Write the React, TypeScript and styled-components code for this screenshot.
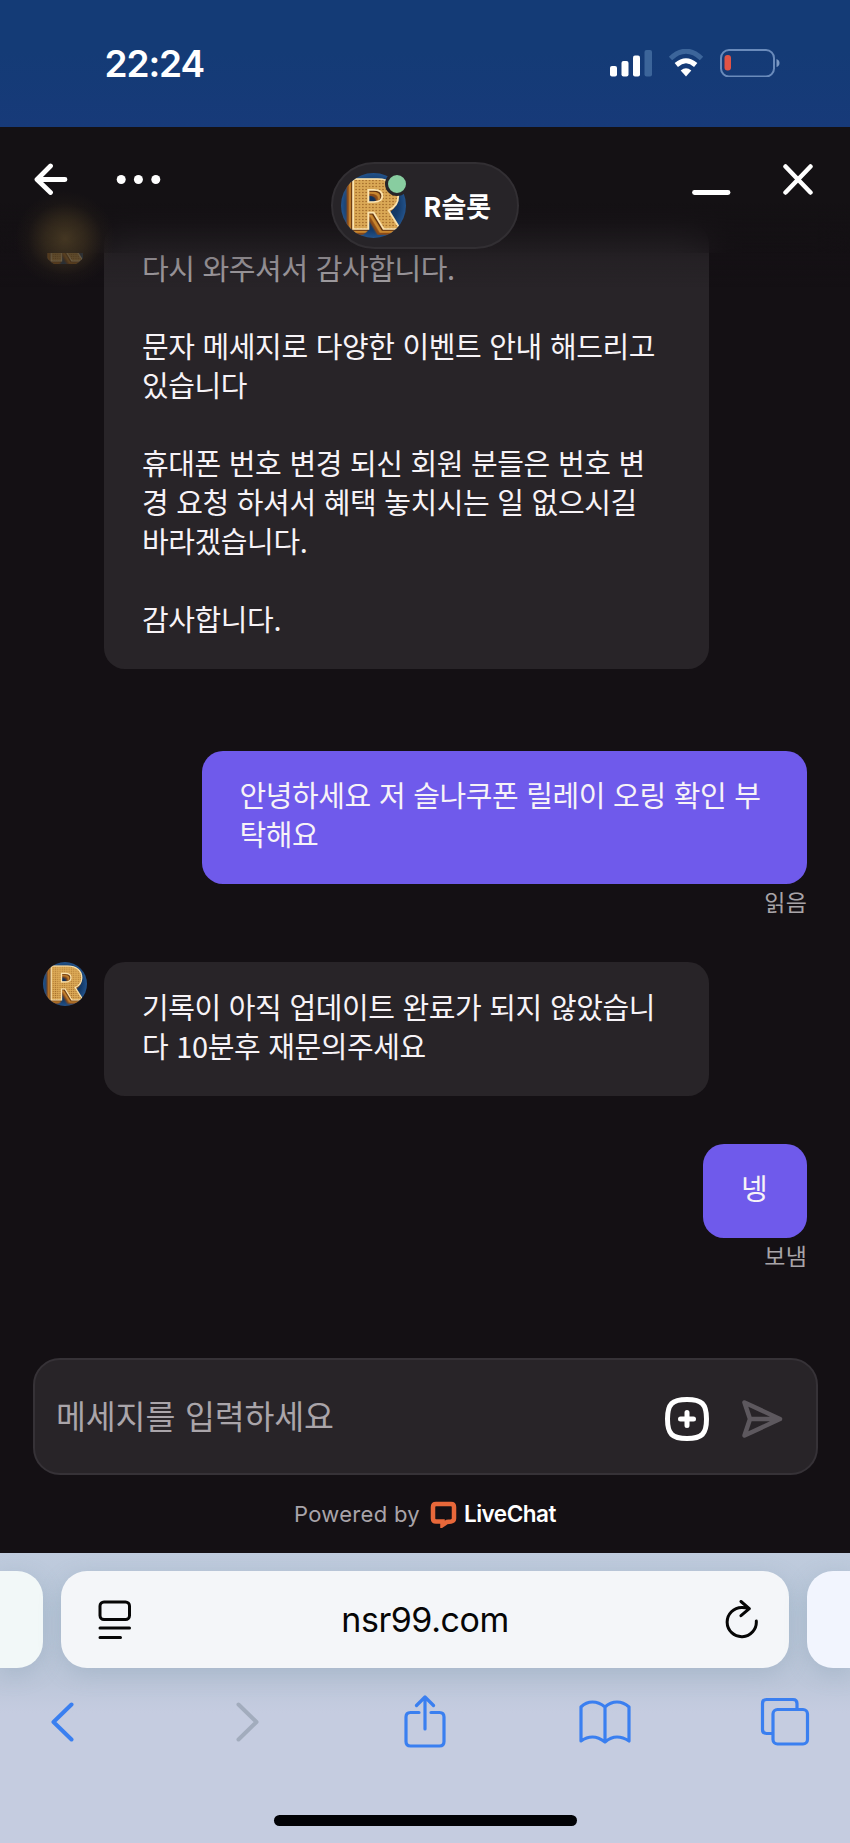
import React from 'react';
import styled, { createGlobalStyle } from 'styled-components';

const GlobalStyle = createGlobalStyle`
  *, *::before, *::after { box-sizing: border-box; }
  body { margin: 0; background: #141014; }
  svg { display: block; flex: none; }
`;

const latin = `Inter, "Noto Sans CJK KR", sans-serif`;
const korean = `"Noto Sans CJK KR", sans-serif`;

const Screen = styled.div`
  width: 850px;
  height: 1843px;
  display: flex;
  flex-direction: column;
  overflow: hidden;
  font-family: ${korean};
  color: #f7f3f7;
`;

const StatusBar = styled.div`
  height: 127px;
  flex: none;
  display: flex;
  align-items: flex-start;
  padding: 49px 70px 0 104.5px;
  background: linear-gradient(#143b76 40%, #173a79);
`;

const Clock = styled.div`
  flex: 1;
  font: 600 37px/30px ${latin};
  letter-spacing: -1.1px;
  color: #fff;
`;

const StatusIcons = styled.div`
  display: flex;
  gap: 16px;
`;

const Chat = styled.main`
  position: relative;
  height: 1426px;
  flex: none;
  display: flex;
  flex-direction: column;
  background: #141014;
`;

const Header = styled.header`
  position: absolute;
  inset: 0 0 auto 0;
  height: 170px;
  z-index: 1;
`;

const HeaderBlur = styled.div`
  position: absolute;
  inset: 0 0 auto 0;
  height: 126px;
  backdrop-filter: blur(18px);
`;

const HeaderShade = styled.div`
  position: absolute;
  inset: 0;
  background: linear-gradient(#141114 0, #141114 76px, rgba(20, 17, 20, 0.5) 110px, rgba(20, 17, 20, 0.15) 134px, rgba(20, 17, 20, 0) 160px);
`;

const AvatarGlow = styled.div`
  position: absolute;
  left: 15px;
  top: 64px;
  width: 100px;
  height: 96px;
  background: radial-gradient(closest-side, rgba(100, 80, 44, 0.6), rgba(88, 70, 38, 0.42) 40%, rgba(60, 48, 28, 0.14) 75%, rgba(40, 32, 20, 0));
`;

const HeaderRow = styled.div`
  position: relative;
  display: flex;
  align-items: flex-start;
  padding: 36px 36px 0 34px;
`;

const HeaderGroup = styled.div<{ $end?: boolean }>`
  flex: 1;
  display: flex;
  justify-content: ${(p) => (p.$end ? 'flex-end' : 'flex-start')};
  gap: ${(p) => (p.$end ? 51 : 48)}px;
`;

const AgentPill = styled.div`
  display: flex;
  align-items: center;
  width: 188px;
  height: 87px;
  margin: -1px -1px 0 1px;
  padding-left: 8px;
  gap: 17px;
  border: 2px solid #322f33;
  border-radius: 44px;
  background: #272428;
  font: 700 27px/38px ${korean};
  color: #fff;
`;

const AgentPhoto = styled.div`
  position: relative;
  width: 65px;
  height: 65px;
`;

const OnlineDot = styled.span`
  position: absolute;
  top: -1px;
  right: -3px;
  width: 24px;
  height: 24px;
  border: 3px solid #272428;
  border-radius: 50%;
  background: #88cda0;
`;

const Messages = styled.section`
  height: 1231px;
  flex: none;
  padding: 96px 43px 0;
  display: flex;
  flex-direction: column;
`;

const AgentMessage = styled.div<{ $top?: number }>`
  display: flex;
  align-items: flex-start;
  gap: 17px;
  margin-top: ${(p) => p.$top ?? 0}px;
`;

const UserMessage = styled.div<{ $top: number }>`
  display: flex;
  flex-direction: column;
  align-items: flex-end;
  margin-top: ${(p) => p.$top}px;
`;

const AvatarSlot = styled.div<{ $scrolled?: boolean }>`
  width: 44px;
  height: 44px;
  opacity: ${(p) => (p.$scrolled ? 0.5 : 1)};
  clip-path: ${(p) => (p.$scrolled ? 'inset(30px 4px 3px 4px)' : 'none')};
`;

const Bubble = styled.div<{ $own?: boolean; $short?: boolean }>`
  width: ${(p) => (p.$short ? 104 : p.$own ? 605.5 : 605)}px;
  padding: 24.5px 38px 31px;
  border-radius: 21px;
  background: ${(p) => (p.$own ? '#6f5aeb' : '#282428')};
  font: 400 29px/39px ${korean};
  letter-spacing: -0.4px;
  word-spacing: 1.9px;
  white-space: pre;
`;

const Faded = styled.span`
  color: rgba(247, 243, 247, 0.6);
`;

const Receipt = styled.div`
  margin-top: 2px;
  height: 30px;
  font: 400 23px/30px ${korean};
  letter-spacing: 0.2px;
  color: #a8a4a8;
`;

const Composer = styled.div`
  height: 117px;
  flex: none;
  margin: 0 32px 0 33px;
  padding: 0 33px 0 21px;
  display: flex;
  align-items: center;
  border: 2px solid #363237;
  border-radius: 27px;
  background: #282428;
`;

const Placeholder = styled.div`
  flex: 1;
  font: 400 32.5px/44px ${korean};
  letter-spacing: -0.1px;
  word-spacing: 2.5px;
  padding-bottom: 3px;
  color: #aaa5aa;
`;

const ComposerIcons = styled.div`
  display: flex;
  align-items: center;
  gap: 32px;
  padding-top: 5px;
`;

const Powered = styled.div`
  height: 30px;
  margin-top: 24px;
  padding-left: 294px;
  display: flex;
  align-items: center;
  font: 400 22px/30px ${latin};
  letter-spacing: 0.3px;
  color: #a9a4a9;
`;

const Brand = styled.div`
  display: flex;
  align-items: center;
  margin-left: 10px;
  gap: 7px;
  font-weight: 600;
  font-size: 22.5px;
  letter-spacing: -0.5px;
  color: #fff;
`;

const Browser = styled.footer`
  height: 290px;
  flex: none;
  padding-top: 18px;
  display: flex;
  flex-direction: column;
  background: linear-gradient(#bfcbdd 0, #b9c7d9 60px, #bdc7da 130px, #c5cce0 160px, #c5cce0);
`;

const TabStrip = styled.div`
  display: flex;
  gap: 18px;
`;

const Tab = styled.div<{ $side?: 'left' | 'right' }>`
  width: ${(p) => (p.$side ? 43 : 728)}px;
  height: 97px;
  flex: none;
  padding: ${(p) => (p.$side ? '0' : '0 31px 0 37px')};
  display: flex;
  align-items: center;
  justify-content: space-between;
  border-radius: ${(p) => (p.$side === 'left' ? '0 26px 26px 0' : p.$side === 'right' ? '26px 0 0 26px' : '26px')};
  background: ${(p) => (p.$side === 'left' ? '#f2f8f8' : p.$side === 'right' ? '#f2f5fe' : '#f4f6f9')};
  box-shadow: 0 6px 22px rgba(120, 145, 165, 0.3);
`;

const Address = styled.div`
  margin-left: -7px;
  font: 400 34px/44px ${latin};
  letter-spacing: -0.45px;
  color: #060606;
`;

const Toolbar = styled.nav`
  height: 54px;
  margin-top: 27px;
  padding-left: 51px;
  display: flex;
  align-items: center;
`;

const Tool = styled.div<{ $gap?: number; $muted?: boolean }>`
  margin-left: ${(p) => p.$gap ?? 0}px;
  color: ${(p) => (p.$muted ? '#a2acbd' : '#3a7ff0')};
`;

const HomeBar = styled.div`
  width: 303px;
  height: 11px;
  margin: 66px 0 0 274px;
  border-radius: 6px;
  background: #020206;
`;

const LogoLetter = styled.text`
  font-family: Inter, sans-serif;
  font-weight: 900;
  font-size: 69px;
  filter: drop-shadow(-1px 1.5px 0 #5e300f) drop-shadow(-1.5px 2px 0 #c8862f) drop-shadow(-2px 2px 0 #8a4a17);
`;

function Logo({ size, id }: { size: number; id: string }) {
  return (
    <svg width={size} height={size} viewBox="0 0 65 65">
      <defs>
        <clipPath id={`${id}-clip`}><circle cx="32.5" cy="32.5" r="32.5" /></clipPath>
        <radialGradient id={`${id}-bg`}>
          <stop offset="0" stopColor="#0f2c54" />
          <stop offset="0.75" stopColor="#143a68" />
          <stop offset="1" stopColor="#22528a" />
        </radialGradient>
        <pattern id={`${id}-mesh`} width="3" height="3" patternUnits="userSpaceOnUse">
          <rect width="3" height="3" fill="#dba956" />
          <circle cx="1.5" cy="1.5" r="0.8" fill="#a66f2c" />
        </pattern>
      </defs>
      <g clipPath={`url(#${id}-clip)`}>
        <rect width="65" height="65" fill={`url(#${id}-bg)`} />
        <LogoLetter x="7.5" y="55.5" transform="scale(1.12 1)" fill={`url(#${id}-mesh)`} stroke="#fbe3ae" strokeWidth="1.6">R</LogoLetter>
      </g>
    </svg>
  );
}

const line = { fill: 'none', stroke: 'currentColor', strokeLinecap: 'round', strokeLinejoin: 'round' } as const;

export default function App() {
  return (
    <Screen>
      <GlobalStyle />
      <StatusBar>
        <Clock>22:24</Clock>
        <StatusIcons>
          <svg width="42" height="28" viewBox="0 0 42 28" fill="#fff">
            <rect y="17" width="7" height="10.500" rx="2" />
            <rect x="11.500" y="12" width="7" height="15.500" rx="2" />
            <rect x="23" y="6.500" width="7" height="21" rx="2" />
            <rect x="34.500" y="1" width="7.500" height="26.500" rx="2" fill="#3c659a" />
          </svg>
          <svg width="36" height="28" viewBox="0 0 36 28">
            <path d="M2.500 9.500Q18-5 33.500 9.500" fill="none" stroke="#3c659a" strokeWidth="5" />
            <path d="M8.300 16Q18 7.500 27.700 16" fill="none" stroke="#fff" strokeWidth="5" />
            <path d="M18 27.500L12.700 21.500Q18 17 23.300 21.500Z" fill="#fff" />
          </svg>
          <svg width="60" height="28" viewBox="0 0 60 28">
            <rect x="1" y="1" width="53" height="26.500" rx="8" fill="none" stroke="#6a8bbb" strokeWidth="2" />
            <path d="M56.500 10Q59.500 11 59.500 14T56.500 18Z" fill="#7b98c2" />
            <rect x="4.500" y="6" width="6.500" height="15.500" rx="3" fill="#e15345" />
          </svg>
        </StatusIcons>
      </StatusBar>

      <Chat>
        <Header>
          <HeaderBlur />
          <HeaderShade />
          <AvatarGlow />
          <HeaderRow>
            <HeaderGroup>
              <svg width="34" height="32" viewBox="0 0 34 32" color="#fff" {...line} strokeWidth="4.800">
                <path d="M31 16.500H3.500M16.500 3L3 16.500L16.500 29.500" />
              </svg>
              <svg width="46" height="32" viewBox="0 0 46 32" fill="#fff">
                <circle cx="5.200" cy="16.500" r="4.500" />
                <circle cx="22.400" cy="16.500" r="4.500" />
                <circle cx="39.800" cy="16.500" r="4.500" />
              </svg>
            </HeaderGroup>
            <AgentPill>
              <AgentPhoto>
                <Logo size={65} id="pill" />
                <OnlineDot />
              </AgentPhoto>
              R슬롯
            </AgentPill>
            <HeaderGroup $end>
              <svg width="40" height="34" viewBox="0 0 40 34" color="#fff" {...line} strokeWidth="4.800">
                <path d="M3.500 29.500H37" />
              </svg>
              <svg width="32" height="32" viewBox="0 0 32 32" color="#fff" {...line} strokeWidth="4.500">
                <path d="M3.500 3.500L28.500 29.500M28.500 3.500L3.500 29.500" />
              </svg>
            </HeaderGroup>
          </HeaderRow>
        </Header>

        <Messages>
          <AgentMessage>
            <AvatarSlot $scrolled><Logo size={44} id="first" /></AvatarSlot>
            <Bubble>
              <Faded>다시 와주셔서 감사합니다.</Faded>
              {'\n\n문자 메세지로 다양한 이벤트 안내 해드리고\n있습니다\n\n휴대폰 번호 변경 되신 회원 분들은 번호 변\n경 요청 하셔서 혜택 놓치시는 일 없으시길\n바라겠습니다.\n\n감사합니다.'}
            </Bubble>
          </AgentMessage>
          <UserMessage $top={82}>
            <Bubble $own>{'안녕하세요 저 슬나쿠폰 릴레이 오링 확인 부\n탁해요'}</Bubble>
            <Receipt>읽음</Receipt>
          </UserMessage>
          <AgentMessage $top={46}>
            <AvatarSlot><Logo size={44} id="second" /></AvatarSlot>
            <Bubble>{'기록이 아직 업데이트 완료가 되지 않았습니\n다 10분후 재문의주세요'}</Bubble>
          </AgentMessage>
          <UserMessage $top={48}>
            <Bubble $own $short>넹</Bubble>
            <Receipt>보냄</Receipt>
          </UserMessage>
        </Messages>

        <Composer>
          <Placeholder>메세지를 입력하세요</Placeholder>
          <ComposerIcons>
            <svg width="44" height="44" viewBox="0 0 44 44" color="#fff" {...line} strokeWidth="5">
              <path d="M22 2.500C37 2.500 41.500 7 41.500 22S37 41.500 22 41.500S2.500 37 2.500 22S7 2.500 22 2.500Z" />
              <path d="M22 15.500V28.500M15.500 22H28.500" />
            </svg>
            <svg width="42" height="40" viewBox="0 0 42 40" color="#5d585e" {...line} strokeWidth="4.500">
              <path d="M3.500 3.500L39 20L3.500 36.500L9 20Z M9 20H38" />
            </svg>
          </ComposerIcons>
        </Composer>
        <Powered>
          Powered by
          <Brand>
            <svg width="27" height="27" viewBox="0 0 27 27">
              <path d="M6 3H21Q24 3 24 6V17.500Q24 20 21 20.500L17 21L12.500 24V20.500H6Q3 20.500 3 17.500V6Q3 3 6 3Z" fill="none" stroke="#e8683a" strokeWidth="4.500" />
            </svg>
            LiveChat
          </Brand>
        </Powered>
      </Chat>

      <Browser>
        <TabStrip>
          <Tab $side="left" />
          <Tab>
            <svg width="34" height="40" viewBox="0 0 34 40" color="#060606" {...line} strokeWidth="3">
              <rect x="2" y="2" width="29.500" height="17.500" rx="4" />
              <path d="M2 28H31.500M2 37.500H22.500" />
            </svg>
            <Address>nsr99.com</Address>
            <svg width="33" height="40" viewBox="0 0 33 40" color="#060606" {...line} strokeWidth="3">
              <path d="M31.300 21A14.600 14.600 0 1 1 17 7.500Q21 7.500 24 8.700M16 1.500L24.300 8.700L16 15.700" />
            </svg>
          </Tab>
          <Tab $side="right" />
        </TabStrip>
        <Toolbar>
          <Tool>
            <svg width="23" height="40" viewBox="0 0 23 40" {...line} strokeWidth="4"><path d="M20.500 2.500L2.500 20L20.500 37.500" /></svg>
          </Tool>
          <Tool $gap={162} $muted>
            <svg width="23" height="40" viewBox="0 0 23 40" {...line} strokeWidth="4"><path d="M2.500 2.500L20.500 20L2.500 37.500" /></svg>
          </Tool>
          <Tool $gap={145}>
            <svg width="42" height="54" viewBox="0 0 42 54" {...line} strokeWidth="3.200">
              <path d="M15 17.500H6.500Q2 17.500 2 22V46.500Q2 51 6.500 51H35.500Q40 51 40 46.500V22Q40 17.500 35.500 17.500H27M21 34V2.500M12.500 10.500L21 2L29.500 10.500" />
            </svg>
          </Tool>
          <Tool $gap={132.500}>
            <svg width="52" height="44" viewBox="0 0 52 44" {...line} strokeWidth="3.200">
              <path d="M26 7Q20 2 13.500 2T2 7V41Q7.500 37 13.500 37T26 42Q32 37 38 37T50 41V7Q44.500 2 38 2T26 7V42" />
            </svg>
          </Tool>
          <Tool $gap={129.500}>
            <svg width="50" height="50" viewBox="0 0 50 50" {...line} strokeWidth="3.200">
              <path d="M37 12V6.500Q37 2.500 33 2.500H6.500Q2.500 2.500 2.500 6.500V32.500Q2.500 36.500 6.500 36.500H12" />
              <rect x="13" y="12.500" width="34.500" height="34.500" rx="4.500" />
            </svg>
          </Tool>
        </Toolbar>
        <HomeBar />
      </Browser>
    </Screen>
  );
}
